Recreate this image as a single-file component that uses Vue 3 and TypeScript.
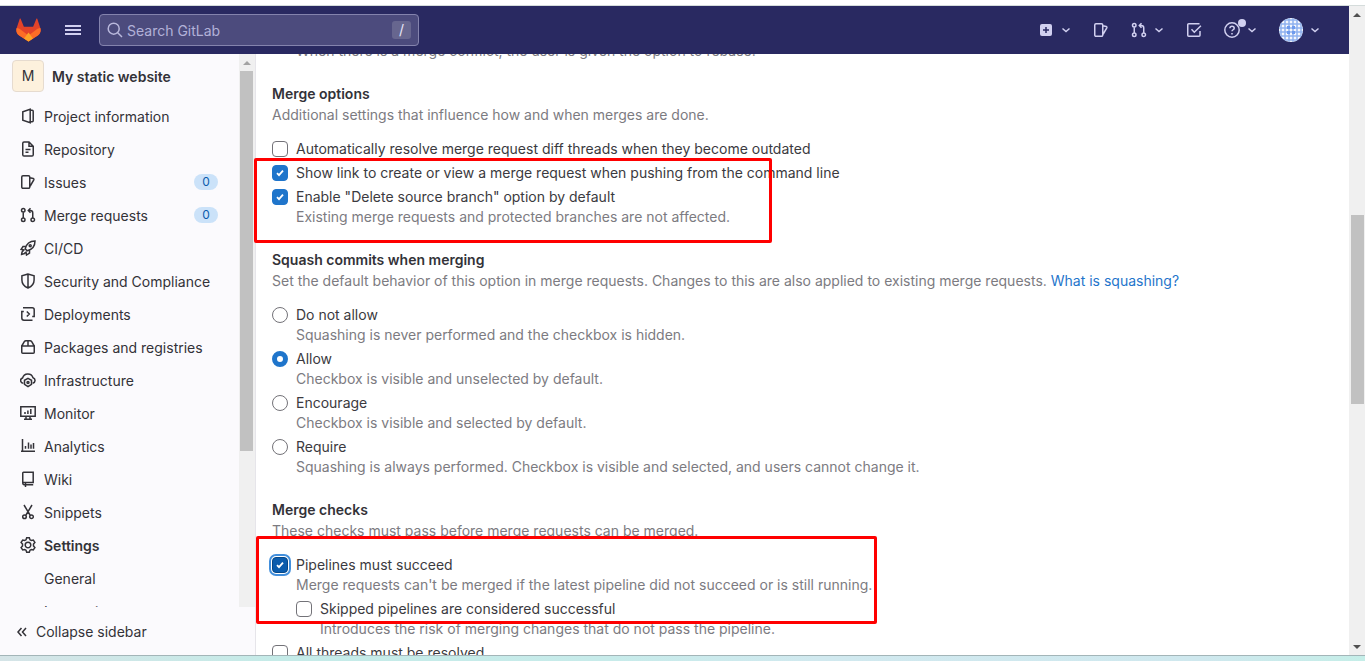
<script setup lang="ts">
import { ref } from 'vue'

interface NavItem {
  label: string
  icon: string
  count?: number
  active?: boolean
}

const icons: Record<string, string> = {
  project: 'M10.2 1.2 2.8 3.8v8.4l7.4 2.6zM10.200 2.300h2a1 1 0 0 1 1 1v9.400a1 1 0 0 1-1 1h-2',
  document: 'M9 1H4a1.3 1.3 0 0 0-1.250 1.250v11.500A1.3 1.3 0 0 0 4 15h8a1.3 1.3 0 0 0 1.250-1.250V5.200zM9 1v4.200h4.250M5.500 8.500h5M5.500 11.300h3',
  issues: 'M3 1.750h5.500a1.250 1.250 0 0 1 1.250 1.250v10a1.250 1.250 0 0 1-1.250 1.250H3A1.250 1.250 0 0 1 1.750 13V3A1.250 1.250 0 0 1 3 1.750zM10 3.800l3.200.7a.9.9 0 0 1 .6 1.300L10.200 12',
  merge: 'M3.250 5.200v5.600M12.750 10.800V6a2.500 2.500 0 0 0-2.500-2.500H8.500M10.500 1.200 8.300 3.500l2.200 2.300M5 3.250a1.750 1.750 0 1 1-3.500 0 1.750 1.750 0 0 1 3.500 0zM5 12.750a1.750 1.750 0 1 1-3.500 0 1.750 1.750 0 0 1 3.500 0zM14.500 12.750a1.750 1.750 0 1 1-3.500 0 1.750 1.750 0 0 1 3.500 0z',
  rocket: 'M5.200 8.800C6.200 4.500 9.500 1.100 15 1c0 5.300-3.300 8.700-7.800 9.800zM5.800 6.500H3L1 9.500l3.600.6M9.500 10.200V13l-3 2-.6-3.600M3.700 10.500C1.700 11 1.800 13 1.600 14.400c1.500-.2 3.300-.2 3.900-2.100M11.200 5.800a1 1 0 1 1-2 0 1 1 0 0 1 2 0z',
  shield: 'M8 1 1.900 2.800V7c0 3.700 2.300 6.500 6.100 8 3.800-1.500 6.100-4.300 6.100-8V2.800zM8 1v14',
  deployments: 'M3 1.750h9.200a2 2 0 0 1 2 2V10.500h-2M3.800 5.500h-2v6.500a2.200 2.200 0 0 0 2.200 2.200h8.500M6.800 5.500 9.300 8l-2.500 2.500',
  package: 'M1.750 7h12.500v6.200a1 1 0 0 1-1 1H2.750a1 1 0 0 1-1-1zM1.750 7 4.300 2.700A2 2 0 0 1 6 1.750h4a2 2 0 0 1 1.700.95L14.250 7M8 1.750V7',
  infrastructure: 'M3.300 11.300A2.700 2.700 0 0 1 2.600 6 5.400 5.400 0 0 1 13 5.700a2.900 2.900 0 0 1-.3 5.600M8 6.300l3.500 2v4L8 14.700l-3.500-2.400v-4zM9 10.500a1 1 0 1 1-2 0 1 1 0 0 1 2 0z',
  monitor: 'M.8 1.750h14.400v9.500H.8zM6 11.500v2.700M10 11.500v2.700M4 14.250h8M5 7v2M7.900 5.500V9M10.800 4v5',
  chart: 'M2.500 1v12.500M1 13.250h14M5.500 8v2.800M8.500 4.500v6.300M11 6.500v4.300M13.500 5v5.800',
  wiki: 'M3.500 1.250h9.700v10.200H2.750V2a.75.75 0 0 1 .75-.75zM2.750 11.500c0 1.300.5 2.250 1.500 2.250h8.950M5.500 11.500V16',
  snippets: 'M4 1l6 10M12 1 6 11M6.300 12.800a1.800 1.800 0 1 1-3.600 0 1.800 1.800 0 0 1 3.600 0zM13.300 12.800a1.800 1.800 0 1 1-3.600 0 1.800 1.800 0 0 1 3.600 0z',
  settings: 'M6.700.8h2.600l.7 2 1.300.7 2-.5L14.900 5.400 13.500 7v2l1.400 1.600-1.600 2.400-2-.5-1.300.7-.7 2H6.700l-.7-2-1.300-.7-2 .5-1.600-2.400L2.500 9V7L1.100 5.400 2.700 3l2 .5L6 2.800zM10.800 8a2.800 2.800 0 1 1-5.600 0 2.800 2.800 0 0 1 5.600 0z',
  todo: 'M14 9v4.250a1 1 0 0 1-1 1H2.750a1 1 0 0 1-1-1V2.750a1 1 0 0 1 1-1H13.500M5.500 7.300l2.800 2.900L14.900 3.800',
}

const navItems: NavItem[] = [
  { label: 'Project information', icon: 'project' },
  { label: 'Repository', icon: 'document' },
  { label: 'Issues', icon: 'issues', count: 0 },
  { label: 'Merge requests', icon: 'merge', count: 0 },
  { label: 'CI/CD', icon: 'rocket' },
  { label: 'Security and Compliance', icon: 'shield' },
  { label: 'Deployments', icon: 'deployments' },
  { label: 'Packages and registries', icon: 'package' },
  { label: 'Infrastructure', icon: 'infrastructure' },
  { label: 'Monitor', icon: 'monitor' },
  { label: 'Analytics', icon: 'chart' },
  { label: 'Wiki', icon: 'wiki' },
  { label: 'Snippets', icon: 'snippets' },
  { label: 'Settings', icon: 'settings', active: true },
]

const mergeOptions = ref([
  { id: 'resolve', label: 'Automatically resolve merge request diff threads when they become outdated', help: '', checked: false },
  { id: 'link', label: 'Show link to create or view a merge request when pushing from the command line', help: '', checked: true },
  { id: 'delete', label: 'Enable "Delete source branch" option by default', help: 'Existing merge requests and protected branches are not affected.', checked: true },
])

const squash = ref('allow')
const squashOptions = [
  { id: 'never', label: 'Do not allow', help: 'Squashing is never performed and the checkbox is hidden.' },
  { id: 'allow', label: 'Allow', help: 'Checkbox is visible and unselected by default.' },
  { id: 'encourage', label: 'Encourage', help: 'Checkbox is visible and selected by default.' },
  { id: 'require', label: 'Require', help: 'Squashing is always performed. Checkbox is visible and selected, and users cannot change it.' },
]

const checks = ref([
  { id: 'pipelines', label: 'Pipelines must succeed', help: "Merge requests can't be merged if the latest pipeline did not succeed or is still running.", checked: true, nested: false, focused: true },
  { id: 'skipped', label: 'Skipped pipelines are considered successful', help: 'Introduces the risk of merging changes that do not pass the pipeline.', checked: false, nested: true, focused: false },
  { id: 'threads', label: 'All threads must be resolved', help: '', checked: false, nested: false, focused: false },
])
</script>

<template>
  <div class="screen">
    <div class="top-edge"></div>
    <div class="window">
      <div class="page">
        <header class="topbar">
          <a class="logo" href="#" aria-label="GitLab">
            <svg width="25" height="24" viewBox="0 0 26 24">
              <path fill="#e24329" d="M4.800.3 8.200 8.500h9.600L21.200.3c.2-.4.7-.4.9 0L25.300 10c1 3-.2 5.900-2.600 7.700L13 24 3.300 17.700C.9 15.900-.3 13 .7 10L3.900.3c.2-.4.7-.4.9 0z" />
              <path fill="#fc6d26" d="M.7 10c1.900.3 3.700 1.200 5.300 2.400L13 17.700l7-5.300c1.600-1.200 3.400-2.100 5.300-2.400 1 3-.2 5.900-2.600 7.700L13 24 3.300 17.700C.9 15.900-.3 13 .7 10z" />
              <path fill="#fca326" d="m13 14.500 4.600 6.300L13 24l-4.600-3.200z" />
            </svg>
          </a>
          <button class="menu" type="button" aria-label="Menu">
            <svg width="16" height="12" viewBox="0 0 16 12" fill="#d1d0f0"><path d="M0 1h16v2H0zM0 5h16v2H0zM0 9h16v2H0z" /></svg>
          </button>
          <label class="search">
            <svg width="16" height="16" viewBox="0 0 16 16" class="line"><path d="M12.200 6.700a5.500 5.500 0 1 1-11 0 5.500 5.500 0 0 1 11 0zM10.700 10.700l4.300 4.300" /></svg>
            <input type="text" placeholder="Search GitLab" aria-label="Search GitLab" />
            <kbd>/</kbd>
          </label>
          <nav class="tools" aria-label="Top navigation">
            <button type="button" aria-label="Create new" class="tool">
              <svg width="16" height="16" viewBox="0 0 16 16"><rect x="2" y="2" width="12" height="12" rx="2" fill="#d1d0f0" /><path d="M8 5v6M5 8h6" stroke="#292961" stroke-width="1.5" /></svg>
              <svg class="line" width="10" height="16" viewBox="0 0 10 16"><path d="m1.500 6.500 3.500 3 3.500-3" /></svg>
            </button>
            <a href="#" aria-label="Issues" class="tool"><svg class="line" width="16" height="16" viewBox="0 0 16 16"><path :d="icons.issues" /></svg></a>
            <button type="button" aria-label="Merge requests" class="tool">
              <svg class="line" width="16" height="16" viewBox="0 0 16 16"><path :d="icons.merge" /></svg>
              <svg class="line" width="10" height="16" viewBox="0 0 10 16"><path d="m1.500 6.500 3.500 3 3.500-3" /></svg>
            </button>
            <a href="#" aria-label="To-Do List" class="tool"><svg class="line" width="16" height="16" viewBox="0 0 16 16"><path :d="icons.todo" /></svg></a>
            <button type="button" aria-label="Help" class="tool">
              <svg class="line" width="16" height="16" viewBox="0 0 16 16"><path d="M15.200 8A7.200 7.200 0 1 1 .8 8a7.200 7.200 0 0 1 14.400 0zM5.900 6.300C6 5 6.800 4.300 8 4.300c1.300 0 2.200.8 2.200 1.900C10.200 7.800 8 7.700 8 9.300M8 10.900v1.500" /></svg>
              <i class="dot"></i>
              <svg class="line" width="10" height="16" viewBox="0 0 10 16"><path d="m1.500 6.500 3.500 3 3.500-3" /></svg>
            </button>
            <button type="button" aria-label="User menu" class="tool">
              <svg width="24" height="24" viewBox="0 0 24 24">
                <defs>
                  <clipPath id="avatar-clip"><circle cx="12" cy="12" r="12" /></clipPath>
                  <pattern id="avatar-grid" width="4" height="4" patternUnits="userSpaceOnUse"><path d="M0 2h4M2 0v4" stroke="#90b2ef" stroke-width="1.5" /></pattern>
                </defs>
                <g clip-path="url(#avatar-clip)">
                  <path fill="#f4f6fc" d="M0 0h24v24H0z" />
                  <path fill="url(#avatar-grid)" d="M0 0h24v24H0z" />
                  <path fill="#6f9bed" d="M8 8h3v3H8zM13 8h3v3h-3zM8 13h3v3H8zM13 13h3v3h-3z" />
                </g>
              </svg>
              <svg class="line" width="10" height="16" viewBox="0 0 10 16"><path d="m1.500 6.500 3.500 3 3.500-3" /></svg>
            </button>
          </nav>
        </header>

        <div class="workspace">
          <aside class="sidebar">
            <div class="sidebar-scroll">
              <div class="sidebar-list">
                <a class="context" href="#"><span class="avatar">M</span><span class="context-name">My static website</span></a>
                <a v-for="item in navItems" :key="item.label" href="#" class="nav-item" :class="{ active: item.active }">
                  <svg class="line" width="16" height="16" viewBox="0 0 16 16"><path :d="icons[item.icon]" /></svg>
                  <span>{{ item.label }}</span>
                  <span v-if="item.count !== undefined" class="badge">{{ item.count }}</span>
                </a>
                <a class="nav-item sub" href="#">General</a>
                <a class="nav-item sub" href="#">Integrations</a>
              </div>
              <div class="scrollbar side-bar">
                <svg width="16" height="17" viewBox="0 0 16 17" fill="#a3a3a3"><path d="m8 7 4 4H4z" /></svg>
                <div class="thumb"></div>
                <div class="rest"></div>
              </div>
            </div>
            <button type="button" class="collapse">
              <svg class="line" width="12" height="12" viewBox="0 0 12 12"><path d="M5.500 2 2 6l3.500 4M10 2 6.500 6l3.500 4" /></svg>
              Collapse sidebar
            </button>
          </aside>

          <main>
            <form class="settings" @submit.prevent>
              <p class="help indent">When there is a merge conflict, the user is given the option to rebase.</p>

              <fieldset>
                <legend>Merge options</legend>
                <p class="intro">Additional settings that influence how and when merges are done.</p>
                <div v-for="option in mergeOptions" :key="option.id" class="choice">
                  <label><input v-model="option.checked" type="checkbox" />{{ option.label }}</label>
                  <p v-if="option.help" class="help">{{ option.help }}</p>
                </div>
              </fieldset>

              <fieldset>
                <legend>Squash commits when merging</legend>
                <p class="intro">Set the default behavior of this option in merge requests. Changes to this are also applied to existing merge requests. <a href="#">What is squashing?</a></p>
                <div v-for="option in squashOptions" :key="option.id" class="choice">
                  <label><input v-model="squash" type="radio" name="squash" :value="option.id" />{{ option.label }}</label>
                  <p class="help">{{ option.help }}</p>
                </div>
              </fieldset>

              <fieldset>
                <legend>Merge checks</legend>
                <p class="intro">These checks must pass before merge requests can be merged.</p>
                <div v-for="option in checks" :key="option.id" class="choice" :class="{ nested: option.nested }">
                  <label><input v-model="option.checked" type="checkbox" :class="{ focused: option.focused }" />{{ option.label }}</label>
                  <p v-if="option.help" class="help">{{ option.help }}</p>
                </div>
              </fieldset>
            </form>
          </main>
          <div class="highlight options-highlight"></div>
          <div class="highlight checks-highlight"></div>
        </div>
      </div>

      <div class="scrollbar page-bar">
        <svg width="16" height="17" viewBox="0 0 16 17" fill="#505050"><path d="m8 7 4 4H4z" /></svg>
        <div class="before"></div>
        <div class="thumb"></div>
        <div class="after"></div>
        <svg width="16" height="17" viewBox="0 0 16 17" fill="#505050"><path d="m8 11 4-4H4z" /></svg>
      </div>
    </div>
    <div class="bottom-edge"></div>
  </div>
</template>

<style>
body {
  margin: 0;
  overflow: hidden;
}
</style>

<style scoped>
* {
  box-sizing: border-box;
}
.screen {
  display: flex;
  flex-direction: column;
  height: 100vh;
  font: 14px/20px Inter, "Noto Sans", sans-serif;
  color: #3b3a40;
  background: #fff;
}
a {
  color: inherit;
  text-decoration: none;
}
button {
  font: inherit;
  color: inherit;
  background: none;
  border: 0;
  padding: 0;
}
svg {
  display: block;
  flex: none;
}
.line {
  fill: none;
  stroke: currentColor;
  stroke-width: 1.5;
}
.top-edge {
  flex: none;
  height: 6px;
  border-bottom: 1px solid #d5dcdb;
}
.bottom-edge {
  flex: none;
  height: 6px;
  border-top: 1px solid #a3b5b8;
  background: linear-gradient(90deg, #d5e4e7, #c5ebe8 20%, #c7ebea 45%, #d1e9ef 60%, #cfe8ee 88%, #c5eee8);
}
.window {
  display: flex;
  flex: 1;
  min-height: 0;
}
.page {
  display: flex;
  flex: 1;
  flex-direction: column;
  min-width: 0;
}
.topbar {
  display: flex;
  flex: none;
  align-items: center;
  height: 48px;
  padding: 0 29px 0 16px;
  background: #292961;
  color: #d1d0f0;
}
.menu {
  margin: 0 18px 0 24px;
}
.search {
  display: flex;
  align-items: center;
  gap: 4px;
  width: 320px;
  height: 32px;
  padding: 0 7px;
  border: 1px solid #8483ad;
  border-radius: 4px;
  background: #4c4b7d;
  color: #b9b8dc;
}
.search input {
  flex: 1;
  min-width: 0;
  padding: 2px 0 0;
  border: 0;
  outline: 0;
  background: none;
  color: inherit;
  font: inherit;
}
.search input::placeholder {
  color: #b2b1d8;
  opacity: 1;
}
kbd {
  width: 19px;
  height: 18px;
  border-radius: 3px;
  background: #67668f;
  color: #e8e7fa;
  font: 14px/18px Inter, sans-serif;
  text-align: center;
}
.tools {
  display: flex;
  align-items: center;
  gap: 22px;
  margin-left: auto;
}
.tool {
  position: relative;
  display: flex;
  align-items: center;
  gap: 7px;
}
.dot {
  position: absolute;
  top: -3px;
  left: 14px;
  width: 8px;
  height: 8px;
  border-radius: 50%;
  background: #d1d0f0;
}
.workspace {
  position: relative;
  display: flex;
  flex: 1;
  min-height: 0;
}
.sidebar {
  display: flex;
  flex: none;
  flex-direction: column;
  width: 256px;
  border-right: 1px solid #e6e5ea;
  background: #fbfafd;
  color: #333238;
}
.sidebar-scroll {
  display: flex;
  flex: 1;
  min-height: 0;
}
.sidebar-list {
  flex: 1;
  overflow: hidden;
  padding-top: 6px;
}
.context {
  display: flex;
  align-items: center;
  gap: 8px;
  margin: 0 12px 8px;
  font-weight: 600;
}
.context-name {
  padding-top: 2px;
}
.avatar {
  width: 32px;
  height: 32px;
  border: 1px solid #e6dbcf;
  border-radius: 4px;
  background: #fdf1dd;
  font-weight: 400;
  line-height: 30px;
  text-align: center;
}
.nav-item {
  display: flex;
  align-items: center;
  gap: 8px;
  height: 33px;
  padding: 0 21px 0 20px;
}
.nav-item svg,
.nav-item .badge {
  margin-bottom: 2px;
}
.nav-item.active {
  font-weight: 600;
}
.nav-item.sub {
  padding-left: 44px;
}
.badge {
  width: 24px;
  height: 16px;
  margin-left: auto;
  border-radius: 8px;
  background: #cbe2f9;
  color: #0b5cad;
  font-size: 12px;
  line-height: 16px;
  text-align: center;
}
.collapse {
  display: flex;
  flex: none;
  align-items: center;
  gap: 8px;
  height: 48px;
  padding: 2px 16px 0;
}
.scrollbar {
  display: flex;
  flex: none;
  flex-direction: column;
  width: 16px;
  background: #f0f0f0;
}
.thumb {
  margin: 0 1px 0 2px;
  background: #c1c1c1;
}
.side-bar .thumb {
  flex: 380;
  margin: 0 2px 0 1px;
}
.side-bar .rest {
  flex: 156;
}
.page-bar .before {
  flex: 192;
}
.page-bar .thumb {
  flex: 189;
}
.page-bar .after {
  flex: 234;
}
main {
  flex: 1;
  min-width: 0;
  overflow: hidden;
  padding: 0 16px;
}
.settings {
  margin-top: -13px;
}
p {
  margin: 0;
}
fieldset {
  min-width: 0;
  margin: 0 0 19px;
  padding: 0;
  border: 0;
}
legend {
  padding: 0 0 2px;
  color: #333238;
  font-weight: 600;
  line-height: 19px;
}
.intro {
  margin-bottom: 14px;
  color: #7c7b81;
}
.intro a {
  color: #1f75cb;
}
.choice {
  margin-bottom: 4px;
}
.choice.nested {
  margin-left: 24px;
}
.choice label {
  display: flex;
  align-items: center;
  gap: 8px;
  width: fit-content;
}
.help {
  padding-left: 24px;
  color: #7c7b81;
}
.help.indent {
  margin-bottom: 23px;
}
input[type='checkbox'],
input[type='radio'] {
  flex: none;
  width: 16px;
  height: 16px;
  margin: 0;
  border: 1px solid #737278;
  border-radius: 4px;
  appearance: none;
  background: #fff;
}
input[type='radio'] {
  border-radius: 50%;
}
input[type='checkbox']:checked {
  border-color: #1f75cb;
  background: #1f75cb url("data:image/svg+xml,%3Csvg xmlns='http://www.w3.org/2000/svg' viewBox='0 0 8 8'%3E%3Cpath d='m1 4.2 2 2 4-4.500' fill='none' stroke='white' stroke-width='1.8'/%3E%3C/svg%3E") center / 8px no-repeat;
}
input[type='checkbox'].focused:checked {
  border-color: #064787;
  background-color: #0b5cad;
  box-shadow: 0 0 0 1px #fff, 0 0 0 3px #428fdc;
}
input[type='radio']:checked {
  border: 5px solid #1f75cb;
}
.highlight {
  position: absolute;
  border: 3px solid #f00;
  border-radius: 2px;
  pointer-events: none;
}
.options-highlight {
  top: 104px;
  left: 254px;
  width: 518px;
  height: 85px;
}
.checks-highlight {
  top: 482px;
  left: 256px;
  width: 621px;
  height: 88px;
}
</style>
